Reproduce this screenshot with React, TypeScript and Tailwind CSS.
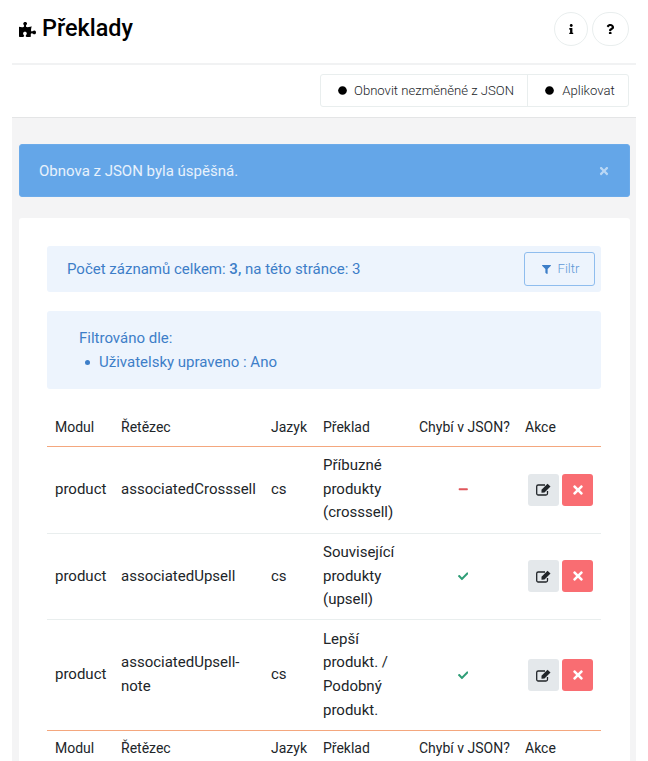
import { FaCheck, FaCircle, FaFilter, FaInfo, FaMinus, FaPuzzlePiece, FaQuestion, FaTimes } from 'react-icons/fa';

const rows = [
    { module: 'product', key: 'associatedCrosssell', lang: 'cs', text: 'Příbuzné produkty (crosssell)', missing: false },
    { module: 'product', key: 'associatedUpsell', lang: 'cs', text: 'Související produkty (upsell)', missing: true },
    { module: 'product', key: 'associatedUpsell-note', lang: 'cs', text: 'Lepší produkt. / Podobný produkt.', missing: true },
];

const HeaderCells = (props: { head?: boolean }) => {
    const cell = `px-2 text-left font-normal whitespace-nowrap ${props.head ? 'pt-[7px] pb-1.5' : 'pt-1.5 pb-[5px]'}`;
    return (
        <tr>
            <th className={cell}>Modul</th>
            <th className={cell}>Řetězec</th>
            <th className={cell}>Jazyk</th>
            <th className={cell}>Překlad</th>
            <th className={cell}>Chybí v JSON?</th>
            <th className={cell}>Akce</th>
        </tr>
    );
};

const EditIcon = () => (
    <svg width="15" height="13" viewBox="0 0 15 13">
        <path d="M11.5 8v2.5A1.5 1.5 0 0 1 10 12H2.2A1.5 1.5 0 0 1 .7 10.500v-7A1.500 1.500 0 0 1 2.200 2H9" fill="none" stroke="currentColor" strokeWidth="1.3" />
        <path d="M5.500 6.800 11.500.8l3 2.700-6 6-3 .3z" fill="currentColor" />
    </svg>
);

export default function App() {
    return (
        <div className="h-[761px] overflow-hidden bg-white px-3 font-['Roboto',sans-serif] text-[15px] text-[#212529]">
            <div className="flex h-[65px] items-center justify-between border-b-2 border-[#f1f2f3] pl-[7px] pr-[7px] pb-[5px]">
                <h1 className="flex items-center gap-[6px] text-[23.4px] leading-none font-medium text-black">
                    <FaPuzzlePiece className="text-[17px]" />
                    Překlady
                </h1>
                <div className="flex gap-1">
                    <button className="flex h-[34px] w-[34px] items-center justify-center rounded-full border border-[#e9eeee] text-[10.5px] text-black">
                        <FaInfo />
                    </button>
                    <button className="flex h-[34px] w-[37px] items-center justify-center rounded-full border border-[#e9eeee] text-[10.5px] text-black">
                        <FaQuestion />
                    </button>
                </div>
            </div>
            <div className="flex h-[53px] items-center justify-end border-b border-[#e4e5e6] pb-[1px] pr-[7px]">
                <div className="flex h-[33px] rounded-[3px] border border-[#e9eeee] text-[13.125px] font-light text-[#212529]">
                    <button className="flex w-[207px] items-center justify-center gap-[7px] border-r border-[#e9eeee] pl-1">
                        <FaCircle className="text-[9px] text-black" />
                        Obnovit nezměněné z JSON
                    </button>
                    <button className="flex w-[100px] items-center justify-center gap-2 pl-1">
                        <FaCircle className="text-[9px] text-black" />
                        Aplikovat
                    </button>
                </div>
            </div>
            <div className="h-full bg-[#f4f4f5] pl-[7px] pr-[6px] pt-[26px]">
                <div className="flex h-[53px] items-center justify-between rounded-[3px] border border-[#6cabea] bg-[#64a6e8] pl-[19px] pr-[19px] pt-[1px] text-white/85">
                    Obnova z JSON byla úspěšná.
                    <FaTimes className="text-[12px] text-white/55" />
                </div>
                <div className="mt-[21px] rounded-[3px] bg-white pl-7 pr-[29px] pt-7">
                    <div className="flex h-[46px] items-center justify-between rounded-[3px] bg-[#edf4fd] pl-5 pr-[6px] text-[#3d7ec8]">
                        <span className="pt-[1px]">
                            Počet záznamů celkem: <b className="font-medium">3,</b> na této stránce: 3
                        </span>
                        <button className="flex h-[34px] w-[71px] items-center justify-center gap-[7px] rounded-[3px] border border-[#8fbdee] pl-[2px] text-[13.125px] font-light text-[#5f97d6]">
                            <FaFilter className="text-[9px] text-[#3d7ec8]" />
                            Filtr
                        </button>
                    </div>
                    <div className="mt-[19px] h-[78px] rounded-[3px] bg-[#edf4fd] pl-8 pt-[15px] leading-6 text-[#3d7ec8]">
                        <p>Filtrováno dle:</p>
                        <p className="flex items-center gap-[9px] pl-[6px]">
                            <span className="size-[5px] rounded-full bg-[#3d7ec8]" />
                            Uživatelsky upraveno : Ano
                        </p>
                    </div>
                    <table className="mt-[20px] w-[554px] table-fixed leading-[23.6px]">
                        <colgroup>
                            <col className="w-[66px]" />
                            <col className="w-[150px]" />
                            <col className="w-[52px]" />
                            <col className="w-[96px]" />
                            <col className="w-[106px]" />
                            <col className="w-[84px]" />
                        </colgroup>
                        <thead className="border-b border-[#f4a77e] text-[14px]">
                            <HeaderCells head />
                        </thead>
                        <tbody>
                            {rows.map((row, i) => (
                                <tr key={row.key} className={i === 0 ? 'h-[87px] border-b border-[#e9eeee]' : i === 1 ? 'border-b border-[#e9eeee]' : ''}>
                                    <td className="px-2 py-[7.5px]">{row.module}</td>
                                    <td className="px-2 py-[7.5px]">{row.key}</td>
                                    <td className="px-2 py-[7.5px]">{row.lang}</td>
                                    <td className="px-2 py-[7.5px]">{row.text}</td>
                                    <td className="px-2 py-[7.5px]">
                                        <div className="flex justify-center pr-[2px]">
                                            {row.missing ? (
                                                <FaCheck className="text-[10.5px] text-[#2f9e77]" />
                                            ) : (
                                                <FaMinus className="text-[10.5px] text-[#e0565b]" />
                                            )}
                                        </div>
                                    </td>
                                    <td className="px-2 py-[7.5px]">
                                        <div className="flex gap-[3px] pl-[3px]">
                                            <button className="flex size-8 items-center justify-center rounded-[3px] bg-[#e4e8eb] text-[#212529]">
                                                <EditIcon />
                                            </button>
                                            <button className="flex size-8 items-center justify-center rounded-[3px] bg-[#f96d72] text-[14px] text-white">
                                                <FaTimes />
                                            </button>
                                        </div>
                                    </td>
                                </tr>
                            ))}
                        </tbody>
                        <tfoot className="border-t border-[#f4a77e] text-[14px]">
                            <HeaderCells />
                        </tfoot>
                    </table>
                </div>
            </div>
        </div>
    );
}
